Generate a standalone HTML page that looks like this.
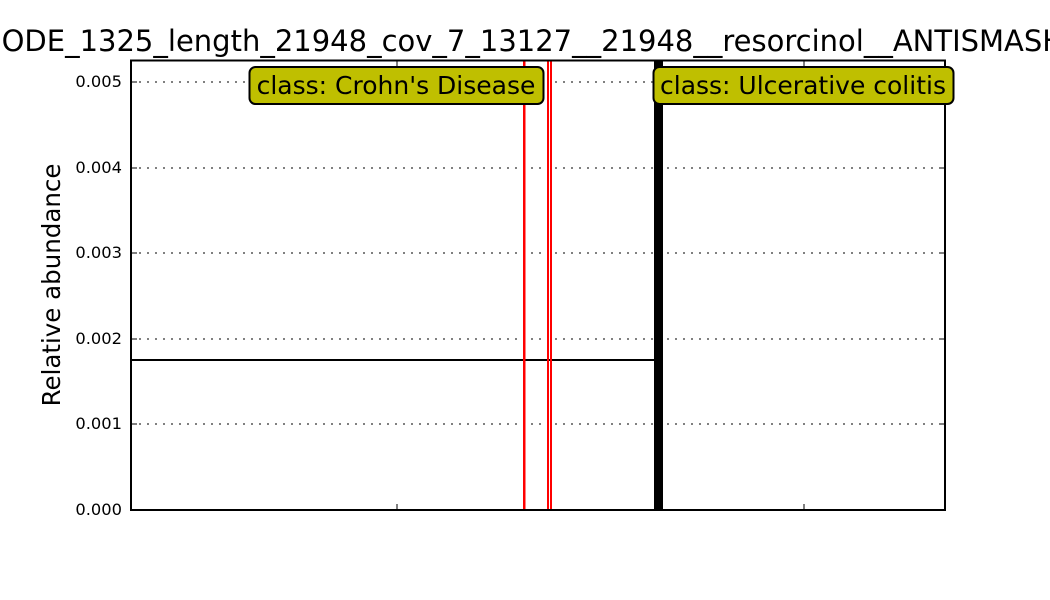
<!DOCTYPE html>
<html><head><style>
html,body{margin:0;padding:0;background:#fff;}
svg{display:block;font-family:"DejaVu Sans","Liberation Sans",sans-serif;}
</style></head><body>
<svg width="1050" height="600" xmlns="http://www.w3.org/2000/svg">
<rect width="1050" height="600" fill="#fff"/>
<text x="522" y="51" font-size="29" text-anchor="middle">NODE_1325_length_21948_cov_7_13127__21948__resorcinol__ANTISMASH</text>
<g stroke="#000" stroke-width="1" stroke-dasharray="2,6">
<line x1="131" y1="82" x2="945" y2="82"/>
<line x1="131" y1="168" x2="945" y2="168"/>
<line x1="131" y1="253" x2="945" y2="253"/>
<line x1="131" y1="339" x2="945" y2="339"/>
<line x1="131" y1="424" x2="945" y2="424"/>
</g>
<line x1="131" y1="360" x2="655" y2="360" stroke="#000" stroke-width="2"/>
<rect x="523" y="60" width="2.5" height="450" fill="#f00"/>
<rect x="547" y="60" width="2" height="450" fill="#f00"/>
<rect x="550" y="60" width="2" height="450" fill="#f00"/>
<rect x="654" y="60" width="9" height="450" fill="#000"/>
<g stroke="#000" stroke-width="1">
<line x1="397" y1="60" x2="397" y2="66"/><line x1="804" y1="60" x2="804" y2="66"/>
<line x1="397" y1="510" x2="397" y2="504"/><line x1="804" y1="510" x2="804" y2="504"/>
<line x1="131" y1="82" x2="137" y2="82"/><line x1="131" y1="168" x2="137" y2="168"/>
<line x1="131" y1="253" x2="137" y2="253"/><line x1="131" y1="339" x2="137" y2="339"/>
<line x1="131" y1="424" x2="137" y2="424"/>
<line x1="945" y1="82" x2="939" y2="82"/><line x1="945" y1="168" x2="939" y2="168"/>
<line x1="945" y1="253" x2="939" y2="253"/><line x1="945" y1="339" x2="939" y2="339"/>
<line x1="945" y1="424" x2="939" y2="424"/>
</g>
<rect x="131" y="60.5" width="814" height="449.5" fill="none" stroke="#000" stroke-width="2"/>
<g font-size="16.3" text-anchor="end">
<text x="122" y="87">0.005</text>
<text x="122" y="173">0.004</text>
<text x="122" y="258">0.003</text>
<text x="122" y="344">0.002</text>
<text x="122" y="429">0.001</text>
<text x="122" y="515">0.000</text>
</g>
<text transform="translate(60,285) rotate(-90)" font-size="24.5" text-anchor="middle">Relative abundance</text>
<rect x="249.5" y="67" width="294" height="37" rx="6" fill="#bfbf00" stroke="#000" stroke-width="2"/>
<text x="396" y="94" font-size="25" text-anchor="middle">class: Crohn's Disease</text>
<rect x="653.5" y="67" width="300" height="37" rx="6" fill="#bfbf00" stroke="#000" stroke-width="2"/>
<text x="803" y="94" font-size="25" text-anchor="middle">class: Ulcerative colitis</text>
</svg>
</body></html>
